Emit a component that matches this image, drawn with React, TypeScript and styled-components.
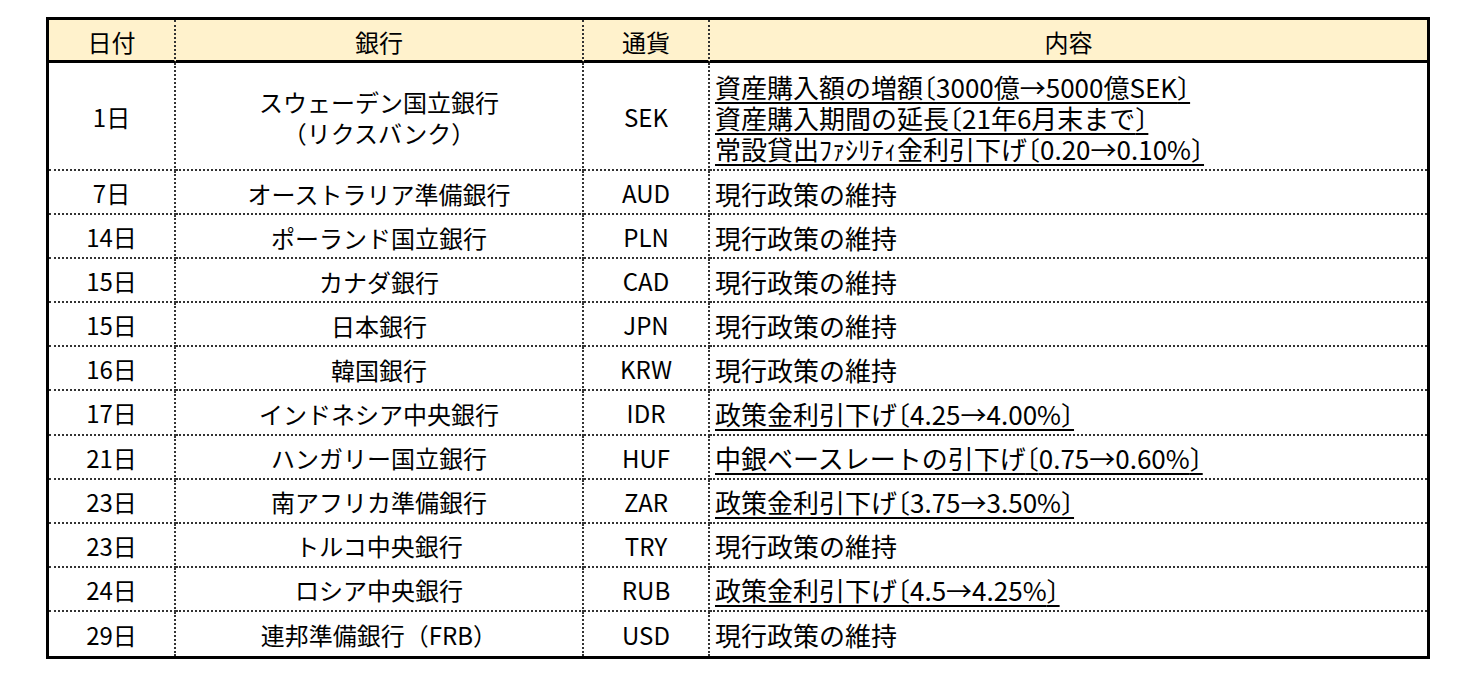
import React from "react";
import styled, { createGlobalStyle } from "styled-components";

const Global = createGlobalStyle`
  html, body { margin: 0; padding: 0; background: #ffffff; }
  body { font-family: "Noto Sans CJK JP", "Noto Sans", sans-serif; color: #000; }
`;

const Page = styled.div`
  padding: 17px 0 0 46px;
  width: 1475px;
  height: 676px;
  box-sizing: border-box;
`;

const Table = styled.div`
  box-sizing: border-box;
  width: 1384px;
  height: 642px;
  border: 3px solid #000;
  display: grid;
  grid-template-columns: 127px 408px 126px 717px;
  grid-template-rows: 43px 108px repeat(11, 1fr);
`;

const Row = styled.div`
  display: contents;
`;

const HeadCell = styled.div<{ $last?: boolean }>`
  box-sizing: border-box;
  background: #fff2cc;
  border-bottom: 3px solid #000;
  border-right: ${(p) => (p.$last ? "none" : "2px dotted #333")};
  display: flex;
  align-items: center;
  justify-content: center;
  font-size: 24px;
  line-height: 1;
  padding-top: 3px;
`;

const Cell = styled.div<{ $last?: boolean; $lastRow?: boolean; $left?: boolean; $size?: number }>`
  box-sizing: border-box;
  border-right: ${(p) => (p.$last ? "none" : "2px dotted #333")};
  border-bottom: ${(p) => (p.$lastRow ? "none" : "2px dotted #333")};
  display: flex;
  flex-direction: column;
  align-items: ${(p) => (p.$left ? "flex-start" : "center")};
  justify-content: center;
  text-align: ${(p) => (p.$left ? "left" : "center")};
  padding-left: ${(p) => (p.$left ? "5px" : "0")};
  padding-top: 2px;
  font-size: ${(p) => p.$size ?? 24}px;
  line-height: 32px;
  white-space: nowrap;
`;

const Line = styled.span<{ $u?: boolean }>`
  display: block;
  line-height: 31px;
  text-decoration: ${(p) => (p.$u ? "underline" : "none")};
  text-decoration-thickness: 2px;
  text-underline-offset: 4px;
`;

const Bracket = styled.span`
  font-feature-settings: "halt";
`;

type Entry = {
  date: string;
  bank: string[];
  cur: string;
  content: string[];
  u?: boolean;
};

const KEEP = "現行政策の維持";

const rows: Entry[] = [
  {
    date: "1日",
    bank: ["スウェーデン国立銀行", "（リクスバンク）"],
    cur: "SEK",
    content: [
      "資産購入額の増額〔3000億→5000億SEK〕",
      "資産購入期間の延長〔21年6月末まで〕",
      "常設貸出ﾌｧｼﾘﾃｨ金利引下げ〔0.20→0.10%〕",
    ],
    u: true,
  },
  { date: "7日", bank: ["オーストラリア準備銀行"], cur: "AUD", content: [KEEP] },
  { date: "14日", bank: ["ポーランド国立銀行"], cur: "PLN", content: [KEEP] },
  { date: "15日", bank: ["カナダ銀行"], cur: "CAD", content: [KEEP] },
  { date: "15日", bank: ["日本銀行"], cur: "JPN", content: [KEEP] },
  { date: "16日", bank: ["韓国銀行"], cur: "KRW", content: [KEEP] },
  { date: "17日", bank: ["インドネシア中央銀行"], cur: "IDR", content: ["政策金利引下げ〔4.25→4.00%〕"], u: true },
  { date: "21日", bank: ["ハンガリー国立銀行"], cur: "HUF", content: ["中銀ベースレートの引下げ〔0.75→0.60%〕"], u: true },
  { date: "23日", bank: ["南アフリカ準備銀行"], cur: "ZAR", content: ["政策金利引下げ〔3.75→3.50%〕"], u: true },
  { date: "23日", bank: ["トルコ中央銀行"], cur: "TRY", content: [KEEP] },
  { date: "24日", bank: ["ロシア中央銀行"], cur: "RUB", content: ["政策金利引下げ〔4.5→4.25%〕"], u: true },
  { date: "29日", bank: ["連邦準備銀行（FRB）"], cur: "USD", content: [KEEP] },
];

function withBrackets(text: string) {
  return text.split(/([〔〕])/).map((part, k) =>
    part === "〔" || part === "〕" ? <Bracket key={k}>{part}</Bracket> : <React.Fragment key={k}>{part}</React.Fragment>
  );
}

export default function App() {
  return (
    <Page>
      <Global />
      <Table>
        <Row>
          <HeadCell>日付</HeadCell>
          <HeadCell>銀行</HeadCell>
          <HeadCell>通貨</HeadCell>
          <HeadCell $last>内容</HeadCell>
        </Row>
        {rows.map((r, i) => {
          const lastRow = i === rows.length - 1;
          return (
            <Row key={i}>
              <Cell $lastRow={lastRow}>{r.date}</Cell>
              <Cell $lastRow={lastRow}>
                {r.bank.map((b, j) => (
                  <Line key={j}>{b}</Line>
                ))}
              </Cell>
              <Cell $lastRow={lastRow}>{r.cur}</Cell>
              <Cell $lastRow={lastRow} $last $left $size={26}>
                {r.content.map((c, j) => (
                  <Line key={j} $u={r.u}>
                    {withBrackets(c)}
                  </Line>
                ))}
              </Cell>
            </Row>
          );
        })}
      </Table>
    </Page>
  );
}
